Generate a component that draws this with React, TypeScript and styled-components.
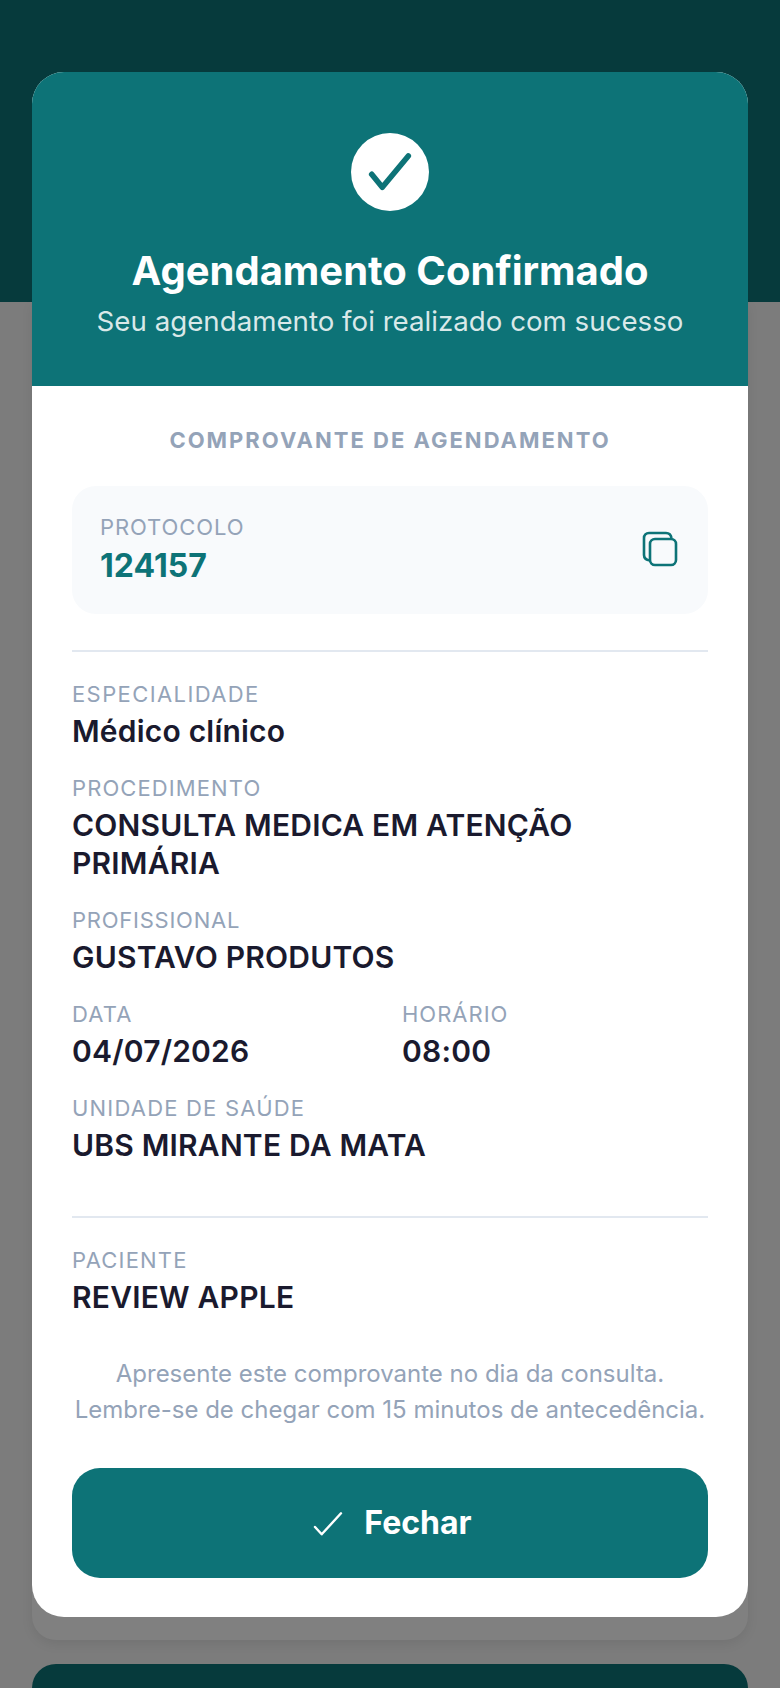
import React from "react";
import styled, { createGlobalStyle } from "styled-components";

const Global = createGlobalStyle`
  html, body { margin: 0; padding: 0; background: #7c7c7c; }
  body { font-family: Inter, "Liberation Sans", sans-serif; }
`;

const Page = styled.div`
  position: relative;
  width: 780px;
  height: 1688px;
  overflow: hidden;
  background: #7c7c7c;
  display: flex;
  flex-direction: column;
`;

const TopBand = styled.div`
  height: 302px;
  flex: none;
  background: #063a3c;
`;

const BackBody = styled.div`
  flex: 1;
  display: flex;
  flex-direction: column;
  gap: 24px;
  padding: 0 32px;
`;

const BackPanel = styled.div`
  flex: none;
  height: 1338px;
  background: #808080;
  border-radius: 0 0 24px 24px;
  box-shadow: 0 4px 12px rgba(0, 0, 0, 0.08);
`;

const BackCard = styled.div`
  flex: 1;
  background: #063a3c;
  border-radius: 24px 24px 0 0;
`;

const Modal = styled.div`
  position: absolute;
  left: 32px;
  top: 72px;
  width: 716px;
  height: 1545px;
  border-radius: 32px;
  overflow: hidden;
  background: #ffffff;
  display: flex;
  flex-direction: column;
`;

const Header = styled.header`
  height: 314px;
  flex: none;
  box-sizing: border-box;
  background: #0d7377;
  padding-top: 61px;
  display: flex;
  flex-direction: column;
  align-items: center;
  color: #ffffff;
`;

const Badge = styled.div`
  width: 78px;
  height: 78px;
  border-radius: 50%;
  background: #ffffff;
  display: flex;
  align-items: center;
  justify-content: center;
`;

const Title = styled.h1`
  margin: 32px 0 0;
  font-size: 40px;
  line-height: 56px;
  font-weight: 700;
`;

const Subtitle = styled.p`
  margin: 4px 0 0;
  font-size: 27.7px;
  line-height: 36px;
  font-weight: 400;
  color: rgba(255, 255, 255, 0.85);
`;

const Body = styled.div`
  flex: 1;
  padding: 40px 40px 40px;
  display: flex;
  flex-direction: column;
`;

const Section = styled.h2`
  margin: 0;
  text-align: center;
  font-size: 22px;
  line-height: 28px;
  font-weight: 700;
  letter-spacing: 2px;
  color: #94a3b8;
`;

const ProtocolBox = styled.div`
  margin-top: 32px;
  height: 128px;
  box-sizing: border-box;
  padding: 0 28px;
  border-radius: 24px;
  background: #f8fafc;
  display: flex;
  align-items: center;
  justify-content: space-between;
`;

const ProtocolLabel = styled.div`
  font-size: 22px;
  line-height: 26px;
  letter-spacing: 0.9px;
  color: #94a3b8;
  margin-bottom: 5px;
`;

const ProtocolValue = styled.div`
  font-size: 32px;
  line-height: 42px;
  font-weight: 700;
  color: #0d7377;
`;

const CopyIcon = styled.svg`
  margin-right: 2px;
  margin-top: -2px;
`;

const Divider = styled.hr<{ $top: number; $bottom: number }>`
  width: 100%;
  margin: ${(p) => p.$top}px 0 ${(p) => p.$bottom}px;
  border: 0;
  height: 2px;
  flex: none;
  background: #e2e8f0;
`;

const Field = styled.div`
  margin-bottom: 25px;
`;

const Label = styled.div<{ $track?: number }>`
  font-size: 22px;
  line-height: 26px;
  letter-spacing: ${(p) => p.$track ?? 1.2}px;
  color: #94a3b8;
  margin-bottom: 5px;
`;

const Value = styled.div`
  font-size: 30px;
  line-height: 38px;
  font-weight: 600;
  letter-spacing: 0.2px;
  color: #1a1a2e;
`;

const TwoCols = styled.div`
  display: grid;
  grid-template-columns: 330px 1fr;
`;

const Note = styled.p`
  margin: 15px 0 0;
  text-align: center;
  font-size: 24px;
  line-height: 36px;
  color: #94a3b8;
`;

const CloseButton = styled.button`
  margin-top: 40px;
  height: 110px;
  flex: none;
  border: 0;
  padding: 0 0 2px 4px;
  border-radius: 28px;
  background: #0d7377;
  color: #ffffff;
  font-family: inherit;
  font-size: 32px;
  font-weight: 700;
  display: flex;
  align-items: center;
  justify-content: center;
  gap: 20px;
`;

export default function App() {
  return (
    <Page>
      <Global />
      <TopBand />
      <BackBody>
        <BackPanel />
        <BackCard />
      </BackBody>
      <Modal>
        <Header>
          <Badge>
            <svg width="48" height="48" viewBox="0 0 48 48" fill="none" stroke="#0d7377" strokeWidth="5.6" strokeLinecap="round" strokeLinejoin="round">
              <path d="M5.7 26.3 L16.3 39.3 L42.3 8" />
            </svg>
          </Badge>
          <Title>Agendamento Confirmado</Title>
          <Subtitle>Seu agendamento foi realizado com sucesso</Subtitle>
        </Header>
        <Body>
          <Section>COMPROVANTE DE AGENDAMENTO</Section>
          <ProtocolBox>
            <div>
              <ProtocolLabel>PROTOCOLO</ProtocolLabel>
              <ProtocolValue>124157</ProtocolValue>
            </div>
            <CopyIcon width="36" height="36" viewBox="0 0 36 36" fill="none" stroke="#0d7377" strokeWidth="2.6">
              <path d="M8 29.5 C4 29 2 27 2 24 V7 C2 4 4 2 7 2 H24 C27 2 29 4 29.5 7" />
              <rect x="8" y="8" width="26" height="26" rx="5" />
            </CopyIcon>
          </ProtocolBox>
          <Divider $top={36} $bottom={29} />
          <Field>
            <Label $track={1.4}>ESPECIALIDADE</Label>
            <Value>Médico clínico</Value>
          </Field>
          <Field>
            <Label $track={1.1}>PROCEDIMENTO</Label>
            <Value>CONSULTA MEDICA EM ATENÇÃO PRIMÁRIA</Value>
          </Field>
          <Field>
            <Label $track={0.75}>PROFISSIONAL</Label>
            <Value>GUSTAVO PRODUTOS</Value>
          </Field>
          <TwoCols>
            <Field>
              <Label>DATA</Label>
              <Value>04/07/2026</Value>
            </Field>
            <Field>
              <Label $track={1}>HORÁRIO</Label>
              <Value>08:00</Value>
            </Field>
          </TwoCols>
          <Field>
            <Label>UNIDADE DE SAÚDE</Label>
            <Value>UBS MIRANTE DA MATA</Value>
          </Field>
          <Divider $top={27} $bottom={29} />
          <Field>
            <Label>PACIENTE</Label>
            <Value>REVIEW APPLE</Value>
          </Field>
          <Note>
            Apresente este comprovante no dia da consulta.
            <br />
            Lembre-se de chegar com 15 minutos de antecedência.
          </Note>
          <CloseButton>
            <svg width="32" height="32" viewBox="0 0 32 32" fill="none" stroke="#ffffff" strokeWidth="2.4" strokeLinecap="round" strokeLinejoin="round">
              <path d="M3 21 L9.7 28.3 L29 7.3" />
            </svg>
            Fechar
          </CloseButton>
        </Body>
      </Modal>
    </Page>
  );
}
